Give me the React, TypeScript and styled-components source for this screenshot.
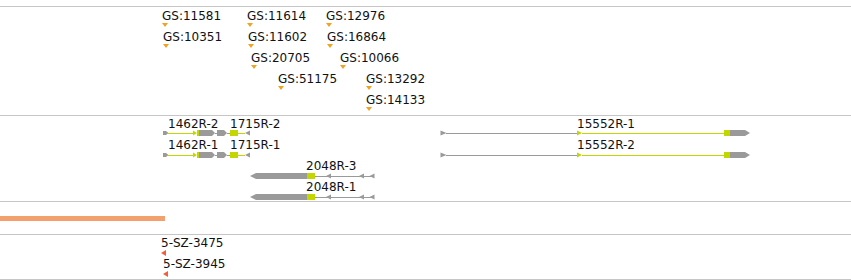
import React from 'react';
import styled, { createGlobalStyle } from 'styled-components';

const Global = createGlobalStyle`
  html, body { margin: 0; padding: 0; background: #ffffff; }
  body { font-family: "DejaVu Sans", Verdana, sans-serif; }
`;

const LINE = '#c6c6c6';
const GRAY = '#9a9a9a';
const YG = '#c3d600';
const ORANGE = '#eea421';
const RED = '#ef5f3f';

const Browser = styled.div`
  width: 851px;
  height: 280px;
  display: flex;
  flex-direction: column;
  overflow: hidden;
  background: #ffffff;
`;

const Ruler = styled.div`
  flex: none;
  height: 6px;
  border-bottom: 1px solid ${LINE};
`;

const Track = styled.div<{ $h: number }>`
  flex: none;
  position: relative;
  height: ${(p) => p.$h}px;
  border-bottom: 1px solid ${LINE};
`;

const BarTrack = styled(Track)`
  padding-top: 14px;
  box-sizing: content-box;
  height: ${(p) => p.$h - 14}px;
`;

const CoverageBar = styled.div<{ $w: number }>`
  width: ${(p) => p.$w}px;
  height: 5px;
  background: #f3a06e;
`;

const Label = styled.span.attrs<{ $x: number; $y: number }>((p) => ({
  style: { left: p.$x, top: p.$y },
}))`
  position: absolute;
  font-size: 12px;
  line-height: 14px;
  color: #111111;
  white-space: nowrap;
`;

const Marker = styled.svg.attrs<{ $x: number; $y: number }>((p) => ({
  style: { left: p.$x, top: p.$y },
}))`
  position: absolute;
  overflow: visible;
`;

const GeneCanvas = styled.svg`
  position: absolute;
  left: 0;
  top: 0;
  width: 851px;
  height: 85px;
`;

type Probe = { name: string; x: number; row: number };

const probes: Probe[] = [
  { name: 'GS:11581', x: 162, row: 0 },
  { name: 'GS:11614', x: 247, row: 0 },
  { name: 'GS:12976', x: 326, row: 0 },
  { name: 'GS:10351', x: 163, row: 1 },
  { name: 'GS:11602', x: 248, row: 1 },
  { name: 'GS:16864', x: 327, row: 1 },
  { name: 'GS:20705', x: 251, row: 2 },
  { name: 'GS:10066', x: 340, row: 2 },
  { name: 'GS:51175', x: 278, row: 3 },
  { name: 'GS:13292', x: 366, row: 3 },
  { name: 'GS:14133', x: 366, row: 4 },
];

const DownTri = ({ x, y }: { x: number; y: number }) => (
  <Marker $x={x} $y={y} width={6} height={4} viewBox="0 0 6 4">
    <polygon points="0,0 6,0 3,4" fill={ORANGE} />
  </Marker>
);

const LeftTri = ({ x, y }: { x: number; y: number }) => (
  <Marker $x={x} $y={y} width={5} height={6} viewBox="0 0 5 6">
    <polygon points="0,3 5,0 5,6" fill={RED} />
  </Marker>
);

const hline = (x1: number, x2: number, c: number, color: string, key: string) => (
  <rect key={key} x={x1} y={c - 0.5} width={x2 - x1} height={1} fill={color} shapeRendering="crispEdges" />
);
const block = (x1: number, x2: number, c: number, color: string, key: string) => (
  <rect key={key} x={x1} y={c - 3} width={x2 - x1} height={6} fill={color} shapeRendering="crispEdges" />
);
const rightTri = (x: number, c: number, color: string, key: string, w = 5) => (
  <polygon key={key} points={`${x},${c - 2.5} ${x + w},${c} ${x},${c + 2.5}`} fill={color} />
);
const leftTri = (x: number, c: number, color: string, key: string, w = 5) => (
  <polygon key={key} points={`${x},${c} ${x + w},${c - 2.5} ${x + w},${c + 2.5}`} fill={color} />
);
const rightBlock = (x1: number, x2: number, tip: number, c: number, color: string, key: string) => (
  <polygon key={key} points={`${x1},${c - 3} ${x2},${c - 3} ${tip},${c} ${x2},${c + 3} ${x1},${c + 3}`} fill={color} />
);
const leftBlock = (tip: number, x1: number, x2: number, c: number, color: string, key: string) => (
  <polygon key={key} points={`${tip},${c} ${x1},${c - 3} ${x2},${c - 3} ${x2},${c + 3} ${x1},${c + 3}`} fill={color} />
);

const Gene1462 = ({ c }: { c: number }) => (
  <g>
    <polygon points={`163,${c - 2} 166,${c - 2} 168.5,${c} 166,${c + 2} 163,${c + 2}`} fill={GRAY} />
    {hline(168, 194, c, YG, 'l1')}
    {rightTri(193, c, YG, 't1', 4)}
    {block(197, 199, c, YG, 'b0')}
    {rightBlock(199, 212, 215, c, GRAY, 'b1')}
    {hline(215, 217, c, GRAY, 'l2')}
    {rightBlock(217, 224, 227, c, GRAY, 'b2')}
    {hline(227, 230, c, GRAY, 'l3')}
    {block(230, 238, c, YG, 'b3')}
    {hline(238, 245, c, YG, 'l4')}
    {leftTri(245, c, GRAY, 't2')}
  </g>
);

const Gene2048 = ({ c }: { c: number }) => (
  <g>
    {leftBlock(250, 256, 307, c, GRAY, 'b1')}
    {block(307, 315, c, YG, 'b2')}
    {hline(315, 374, c, GRAY, 'l1')}
    {leftTri(326, c, GRAY, 't1')}
    {leftTri(359, c, GRAY, 't2')}
    {leftTri(369.5, c, GRAY, 't3')}
  </g>
);

const Gene15552 = ({ c }: { c: number }) => (
  <g>
    {rightTri(440.5, c, GRAY, 't0', 6)}
    {hline(446, 577, c, GRAY, 'l1')}
    {rightTri(577, c, YG, 't1')}
    {hline(582, 724, c, YG, 'l2')}
    {block(724, 730, c, YG, 'b1')}
    {rightBlock(730, 745, 750, c, GRAY, 'b2')}
  </g>
);

const transcripts = [
  { name: '1462R-2', x: 168, row: 0 },
  { name: '1715R-2', x: 230, row: 0 },
  { name: '15552R-1', x: 577, row: 0 },
  { name: '1462R-1', x: 168, row: 1 },
  { name: '1715R-1', x: 230, row: 1 },
  { name: '15552R-2', x: 577, row: 1 },
  { name: '2048R-3', x: 306, row: 2 },
  { name: '2048R-1', x: 306, row: 3 },
];

const glyphCenters = [17, 39, 60, 81];

const App: React.FC = () => (
  <>
    <Global />
    <Browser>
      <Ruler />
      <Track $h={108}>
        {probes.map((p) => (
          <React.Fragment key={p.name}>
            <Label $x={p.x} $y={2 + p.row * 21}>{p.name}</Label>
            <DownTri x={p.x} y={16 + p.row * 21} />
          </React.Fragment>
        ))}
      </Track>
      <Track $h={85}>
        <GeneCanvas viewBox="0 0 851 85">
          <Gene1462 c={glyphCenters[0]} />
          <Gene1462 c={glyphCenters[1]} />
          <Gene15552 c={glyphCenters[0]} />
          <Gene15552 c={glyphCenters[1]} />
          <Gene2048 c={glyphCenters[2]} />
          <Gene2048 c={glyphCenters[3]} />
        </GeneCanvas>
        {transcripts.map((t) => (
          <Label key={t.name} $x={t.x} $y={1 + t.row * 21}>{t.name}</Label>
        ))}
      </Track>
      <BarTrack $h={32}>
        <CoverageBar $w={165} />
      </BarTrack>
      <Track $h={44}>
        <Label $x={161} $y={1}>5-SZ-3475</Label>
        <LeftTri x={161} y={15} />
        <Label $x={163} $y={22}>5-SZ-3945</Label>
        <LeftTri x={163} y={36} />
      </Track>
    </Browser>
  </>
);

export default App;
